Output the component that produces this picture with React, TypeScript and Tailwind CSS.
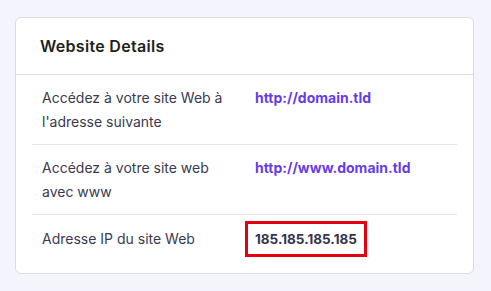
const rows = [
  {
    label: "Accédez à votre site Web à l'adresse suivante",
    value: "http://domain.tld",
    link: true,
  },
  {
    label: "Accédez à votre site web avec www",
    value: "http://www.domain.tld",
    link: true,
  },
  {
    label: "Adresse IP du site Web",
    value: "185.185.185.185",
    highlight: true,
  },
];

export default function App() {
  return (
    <div className="min-h-screen w-[491px] h-[291px] bg-[#f4f5fc] pt-[17px] pl-[15px] font-['Inter','Liberation_Sans',sans-serif]">
      <div className="w-[459px] h-[257px] bg-white border border-[#dcdde3] rounded-[6px] flex flex-col">
        {/* header */}
        <div className="h-[57px] flex items-center px-[24px] border-b border-[#dcdde3]">
          <h2 className="text-[16px] font-semibold text-[#1d1e20] tracking-[0.3px]">
            Website Details
          </h2>
        </div>

        <div className="px-[16px]">
          {rows.map((row, i) => (
            <div
              key={i}
              className={
                "flex pl-[10px] " +
                (i < rows.length - 1
                  ? "h-[70px] items-center border-b border-[#e3e4e8]"
                  : "h-[48px] items-center")
              }
            >
              <div className="w-[213px] pr-[20px] text-[14px] leading-[24px] text-[#3b3a4f]">
                {row.label}
              </div>
              <div className="flex-1 self-stretch flex items-center">
                {row.highlight ? (
                  <span className="-ml-[10px] border-[3px] border-[#e3000f] px-[7px] h-[36px] w-[122px] flex items-center text-[13.5px] font-bold text-[#36344d]">
                    {row.value}
                  </span>
                ) : (
                  <a
                    href="#"
                    className="-mt-[24px] text-[14px] leading-[24px] font-bold text-[#673de6]"
                  >
                    {row.value}
                  </a>
                )}
              </div>
            </div>
          ))}
        </div>
      </div>
    </div>
  );
}
